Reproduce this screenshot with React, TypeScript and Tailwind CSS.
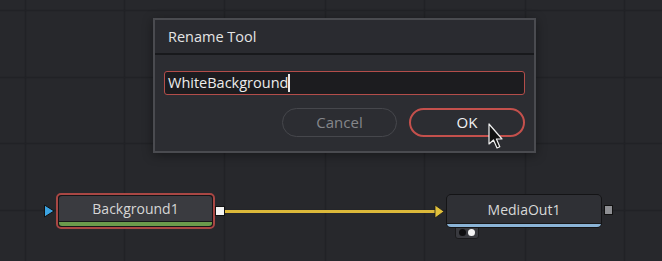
import React from 'react';

const gridX = [25, 124, 224, 325, 424, 525, 624];
const gridY = [10, 77, 143, 210];

const Canvas: React.FC = () => (
  <svg className="absolute inset-0" width={662} height={261}>
    {gridX.map(x => (
      <line key={`x${x}`} x1={x + 0.5} y1={0} x2={x + 0.5} y2={261} stroke="#212226" strokeWidth={1.5} />
    ))}
    {gridY.map(y => (
      <line key={`y${y}`} x1={0} y1={y + 0.5} x2={662} y2={y + 0.5} stroke="#212226" strokeWidth={1.5} />
    ))}
    {/* wire */}
    <line x1={224} y1={211.5} x2={436} y2={211.5} stroke="#dcb93a" strokeWidth={3} />
    <polygon points="435,205 444,211.5 435,218" fill="#e2c13c" stroke="#1a1a1a" strokeWidth={0.8} />
    {/* blue input */}
    <polygon points="44.5,205 54,211 44.5,217" fill="#3ba3e2" stroke="#111" strokeWidth={1} />
  </svg>
);

const Cursor: React.FC = () => (
  <svg className="absolute left-[487px] top-[123px]" width={16} height={28} viewBox="0 0 16 28">
    <path d="M2 1 L2 21 L6.5 17 L10 25 L12.8 23.8 L9.4 16 L15 16 Z" fill="#111" stroke="#f0f0f0" strokeWidth={1.2} strokeLinejoin="round" />
  </svg>
);

const RenameDialog: React.FC = () => (
  <div className="absolute left-[153px] top-[18px] w-[383px] h-[135px] flex flex-col border-2 border-[#4a4b50] bg-[#2c2d32] shadow-[0_2px_10px_rgba(0,0,0,0.4)]">
    <div className="h-[35px] flex items-center px-[13px] bg-[#2a2b30] border-b-2 border-[#18191c] text-[14.5px] text-[#e4e4e4]">
      Rename Tool
    </div>
    <div className="flex flex-col px-[9px] pt-[16px]">
      <div className="h-[24px] flex items-center pl-[3px] rounded-[3px] border-[1.5px] border-[#b34d4a] bg-[#1c1c1f] text-[14.5px] text-[#ececec]">
        <span>WhiteBackground</span>
        <span className="w-[1.5px] h-[18px] bg-[#e8e8e8]" />
      </div>
      <div className="flex justify-end gap-[12px] mt-[13px]">
        <div className="w-[115px] h-[29px] flex items-center justify-center rounded-full border-[1.5px] border-[#46474c] text-[15px] text-[#85868a]">
          Cancel
        </div>
        <div className="w-[116px] h-[29px] flex items-center justify-center rounded-full border-2 border-[#c4504c] text-[15px] text-[#f2f2f2]">
          OK
        </div>
      </div>
    </div>
  </div>
);

const App: React.FC = () => {
  return (
    <div className="relative w-[662px] h-[261px] overflow-hidden bg-[#27282c] font-['Open_Sans',sans-serif]">
      <Canvas />

      {/* Background1 node */}
      <div className="absolute left-[56px] top-[193px] w-[159px] h-[36px] rounded-[5px] border-2 border-[#a94744] bg-[#151517] p-[1px]">
        <div className="h-full flex flex-col rounded-[3px] overflow-hidden">
          <div className="flex-1 flex items-center justify-center bg-[#3a3b40] text-[14px] text-[#d6d6d6] border-b border-[#17181a]">
            Background1
          </div>
          <div className="h-[4px] bg-[#6b9a4c]" />
        </div>
      </div>
      <div className="absolute left-[215px] top-[206px] w-[10px] h-[10px] bg-[#f4f4f4] border border-[#111]" />

      {/* MediaOut1 node */}
      <div className="absolute left-[455px] top-[226px] w-[24px] h-[13px] flex items-center justify-center gap-[2px] rounded-b-[3px] bg-[#393a3f] border border-[#1a1a1c]">
        <span className="w-[7px] h-[7px] rounded-full bg-[#0e0e10]" />
        <span className="w-[7px] h-[7px] rounded-full bg-[#f4f4f4]" />
      </div>
      <div className="absolute left-[446px] top-[194px] w-[156px] h-[34px] rounded-[5px] border border-[#141416] bg-[#141416] overflow-hidden flex flex-col">
        <div className="flex-1 flex items-center justify-center bg-[#2f3035] text-[14px] text-[#d8d8d8] border-b border-[#17181a]">
          MediaOut1
        </div>
        <div className="h-[3px] bg-[#8ab3d6]" />
      </div>
      <div className="absolute left-[604px] top-[205px] w-[9px] h-[10px] bg-[#8e8f93] border border-[#111]" />

      <RenameDialog />
      <Cursor />
    </div>
  );
};

export default App;
